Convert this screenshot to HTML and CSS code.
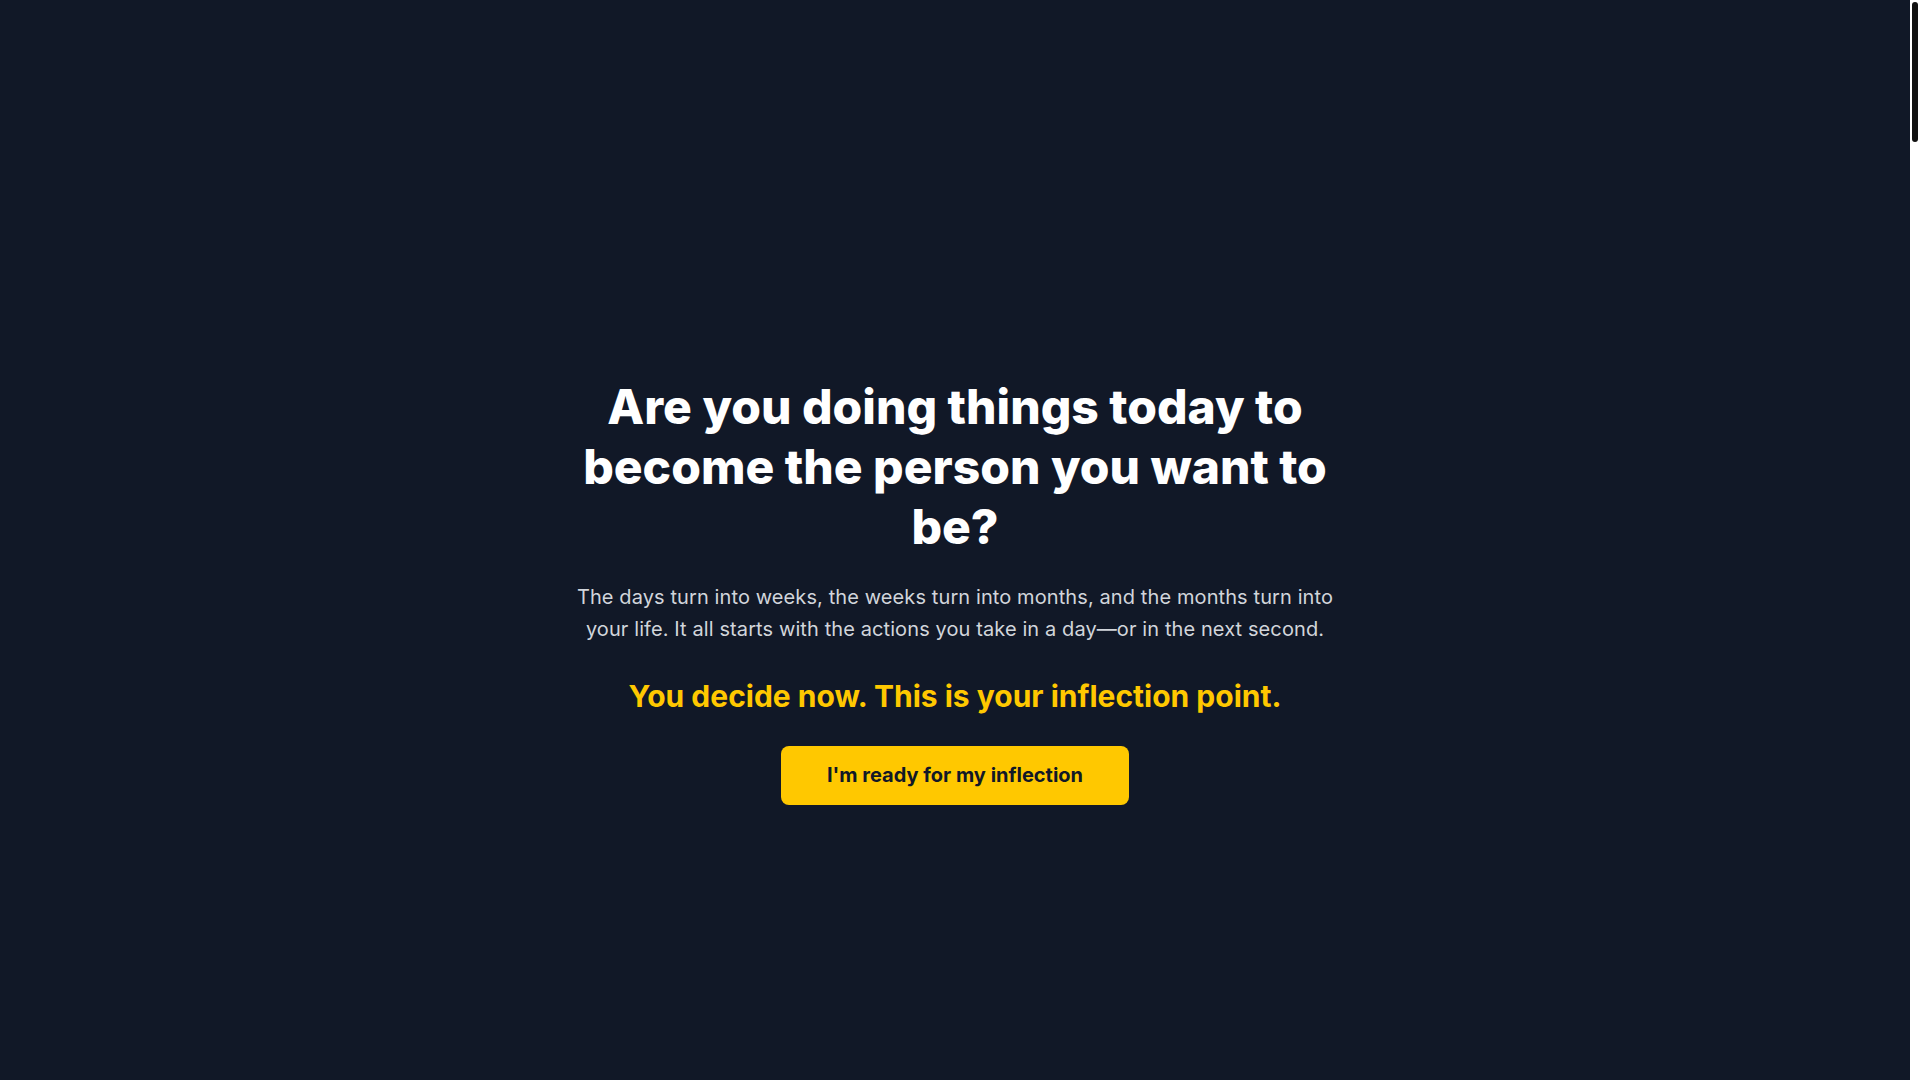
FILE: index.html
```html
<!DOCTYPE html>
<html lang="en">
<head>
<meta charset="utf-8">
<title>Inflection</title>
<link rel="stylesheet" href="styles.css">
</head>
<body>
<main class="page">
  <section class="hero">
    <div class="hero-inner">
      <h1 class="hero-title">Are you doing things today to become the person you want to be?</h1>
      <p class="hero-text">The days turn into weeks, the weeks turn into months, and the months turn into your life. It all starts with the actions you take in a day—or in the next second.</p>
      <p class="hero-tagline">You decide now. This is your inflection point.</p>
      <a class="hero-button" href="#start">I'm ready for my inflection</a>
    </div>
  </section>
  <section class="rest" id="start"></section>
</main>
<div class="scrollbar" aria-hidden="true"><div class="scrollbar-thumb"></div></div>
</body>
</html>
```

FILE: styles.css
```css
html {
  background: #111827;
}
body {
  margin: 0;
  background: #111827;
  font-family: Inter, "Noto Sans", sans-serif;
  color: #ffffff;
}
.page {
  display: flex;
  flex-direction: column;
  padding-right: 10px;
}
.hero {
  min-height: 100vh;
  box-sizing: border-box;
  padding-top: 102px;
  display: flex;
  align-items: center;
  justify-content: center;
}
.hero-inner {
  max-width: 768px;
  width: 100%;
  display: flex;
  flex-direction: column;
  align-items: center;
  text-align: center;
}
.hero-title {
  margin: 0 0 24px;
  font-size: 48px;
  line-height: 60px;
  font-weight: 800;
  color: #ffffff;
}
.hero-text {
  margin: 0;
  font-size: 20px;
  line-height: 32px;
  letter-spacing: 0.1px;
  color: #d1d5db;
}
.hero-tagline {
  margin: 33px 0 0;
  font-size: 30px;
  line-height: 36px;
  font-weight: 700;
  color: #ffc800;
}
.hero-button {
  margin-top: 32px;
  display: inline-block;
  padding: 16px 46px;
  border-radius: 8px;
  background: #ffc800;
  color: #111827;
  font-size: 20px;
  line-height: 27px;
  font-weight: 700;
  text-decoration: none;
}
.rest {
  height: 7250px;
}
.scrollbar {
  position: fixed;
  top: 0;
  right: 0;
  width: 10px;
  height: 100vh;
  background: #ffffff;
}
.scrollbar-thumb {
  margin: 2px 2px 0;
  height: 140px;
  border-radius: 3px;
  background: #111111;
}
```
